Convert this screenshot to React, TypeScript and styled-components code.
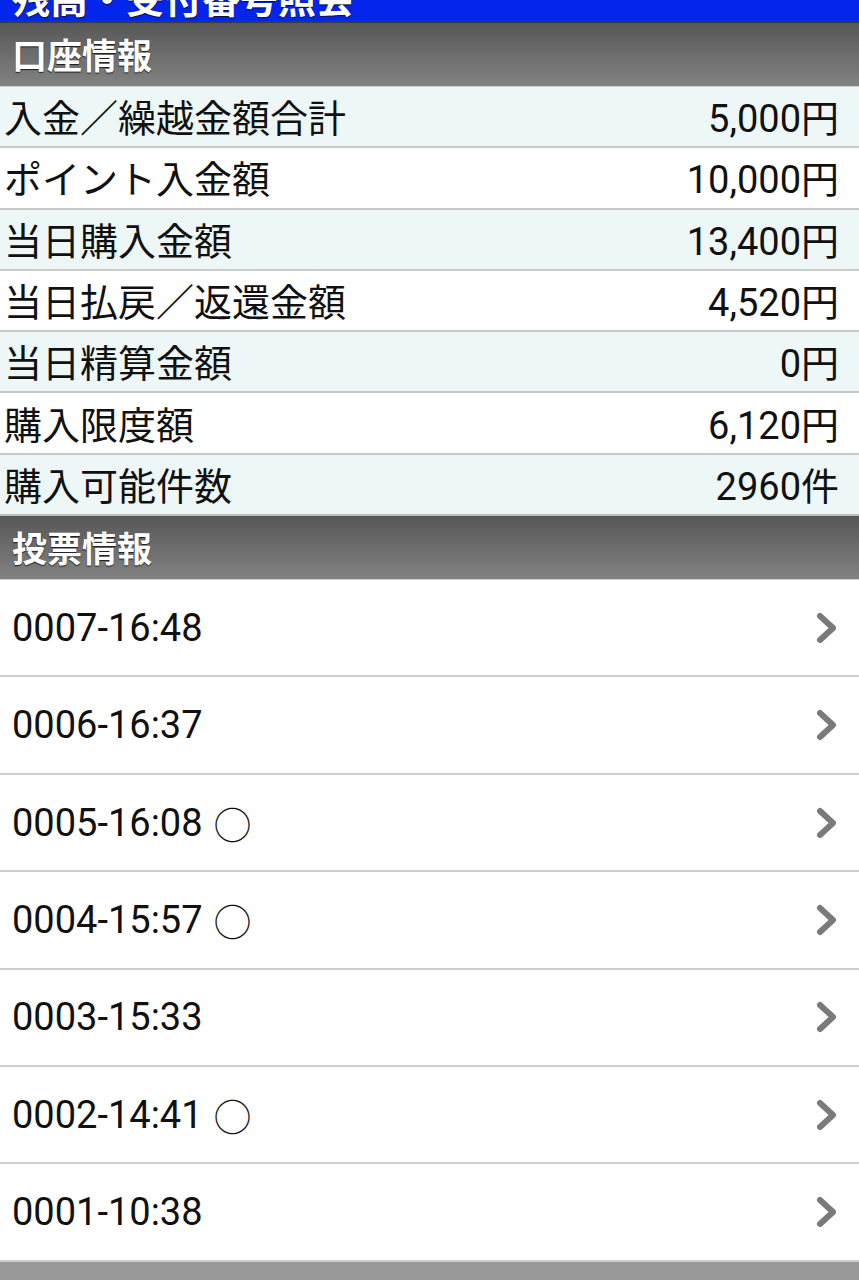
import React from 'react'
import styled, { createGlobalStyle } from 'styled-components';

const GlobalStyle = createGlobalStyle`
  html, body {
    margin: 0;
    padding: 0;
    background: #ffffff;
  }
  body {
    font-family: Roboto, "Noto Sans CJK JP", "Noto Sans", sans-serif;
    color: #111;
  }
`;

const accountRows = [
  { label: '入金／繰越金額合計', value: '5,000円' },
  { label: 'ポイント入金額', value: '10,000円' },
  { label: '当日購入金額', value: '13,400円' },
  { label: '当日払戻／返還金額', value: '4,520円' },
  { label: '当日精算金額', value: '0円' },
  { label: '購入限度額', value: '6,120円' },
  { label: '購入可能件数', value: '2960件' },
];

const votes = [
  { id: '0007-16:48', hit: false },
  { id: '0006-16:37', hit: false },
  { id: '0005-16:08', hit: true },
  { id: '0004-15:57', hit: true },
  { id: '0003-15:33', hit: false },
  { id: '0002-14:41', hit: true },
  { id: '0001-10:38', hit: false },
];

const Chevron = () => (
  <svg width="24" height="32" viewBox="0 0 24 32">
    <polyline points="5,4 18,16 5,28" fill="none" stroke="#7a7a7a" strokeWidth="6" strokeLinecap="round" strokeLinejoin="round" />
  </svg>
);

const App = () => {
  return (
    <Page>
      <GlobalStyle />
      <TitleBar>残高・受付番号照会</TitleBar>

      <SectionHeader>口座情報</SectionHeader>
      <InfoList>
        {accountRows.map((row, i) => (
          <InfoRow key={row.label} $alt={i % 2 === 0}>
            <span>{row.label}</span>
            <span>{row.value}</span>
          </InfoRow>
        ))}
      </InfoList>

      <SectionHeader>投票情報</SectionHeader>
      <VoteList>
        {votes.map((v) => (
          <VoteItem key={v.id}>
            <VoteText>
              {v.id}
              {v.hit && <Mark>○</Mark>}
            </VoteText>
            <Chevron />
          </VoteItem>
        ))}
      </VoteList>
      <Footer />
    </Page>
  )
}

const Page = styled.div`
  width: 859px;
  overflow: hidden;
`;

// page is scrolled a little, so only the bottom of the title shows
const TitleBar = styled.div`
  height: 42px;
  margin-top: -21px;
  background: #0325ec;
  color: #fff;
  font-size: 38px;
  font-weight: bold;
  line-height: 42px;
  padding-left: 12px;
  text-shadow: 0 1px 1px #112;
  white-space: nowrap;
  border-bottom: 2px solid #3a3a3a;
`;

const SectionHeader = styled.div`
  height: 64px;
  box-sizing: border-box;
  background: linear-gradient(#575757, #828282);
  color: #fff;
  font-size: 35px;
  font-weight: bold;
  display: flex;
  align-items: center;
  padding-left: 12px;
  padding-bottom: 2px;
  text-shadow: 0 1px 1px #1c1c1c;
  border-bottom: 1px solid #d0d0d0;
`;

const InfoList = styled.div`
  display: flex;
  flex-direction: column;
`;

const InfoRow = styled.div<{ $alt: boolean }>`
  height: 61.3px;
  box-sizing: border-box;
  display: flex;
  justify-content: space-between;
  align-items: center;
  padding: 0 20px 2px 4px;
  font-size: 38px;
  color: #111;
  background: ${(p) => (p.$alt ? '#eef7f7' : '#ffffff')};
  border-bottom: 2px solid #c9c9c9;
  &:last-child {
    border-bottom: 2px solid #bdbdbd;
  }
`;

const VoteList = styled.div`
  display: flex;
  flex-direction: column;
`;

const VoteItem = styled.div`
  height: 97.4px;
  box-sizing: border-box;
  display: flex;
  justify-content: space-between;
  align-items: center;
  padding: 0 20px 0 12px;
  border-bottom: 2px solid #cdcdcd;
  background: #fff;
`;

const VoteText = styled.span`
  font-size: 38px;
  color: #111;
  display: flex;
  align-items: center;
`;

const Mark = styled.span`
  font-family: "Noto Sans CJK JP", sans-serif;
  font-size: 38px;
  margin-left: 11px;
  font-weight: 300;
`;

const Footer = styled.div`
  height: 40px;
  background: #999;
`;

export default App
